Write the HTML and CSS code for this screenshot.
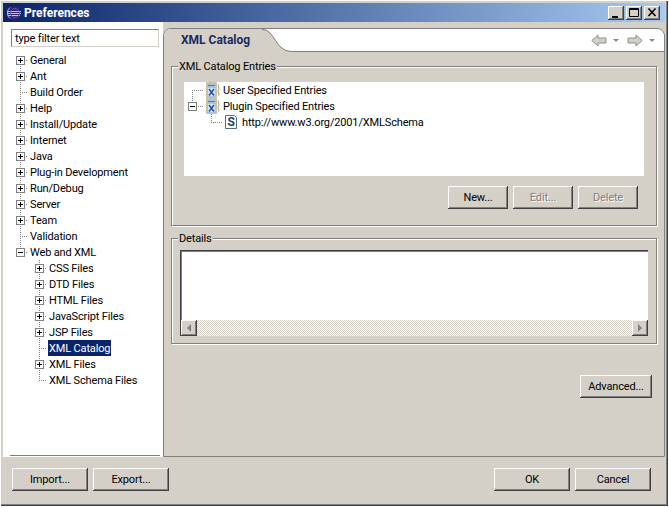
FILE: index.html
```html
<!DOCTYPE html>
<html lang="en">
<head>
    <meta charset="UTF-8">
    <title>Preferences</title>
    <link rel="stylesheet" href="styles.css">
</head>
<body>
    <div class="window">
        <div class="titlebar">
            <svg class="app-icon" width="16" height="16" viewBox="0 0 16 16">
                <circle cx="8" cy="8" r="7" fill="#2c2470"/>
                <path d="M4 2.500a7 7 0 0 0 0 11" fill="none" stroke="#b8a8e0"/>
                <path d="M1 6.500h14M1 8.500h14M2 10.500h12" stroke="#c8c0f0"/>
                <circle cx="9" cy="8" r="4.500" fill="none" stroke="#6858b0"/>
            </svg>
            <span class="title">Preferences</span>
            <div class="win-buttons">
                <span class="win-btn"><svg width="14" height="13" viewBox="0 0 14 13"><path d="M3 10h6v2H3z" fill="#000"/></svg></span>
                <span class="win-btn"><svg width="14" height="13" viewBox="0 0 14 13"><path d="M2.500 2.500h9v8h-9zM2.500 3.500h9" fill="none" stroke="#000"/></svg></span>
                <span class="win-btn close"><svg width="14" height="13" viewBox="0 0 14 13"><path d="M3.500 2.500l7 7.500M10.500 2.500l-7 7.500" fill="none" stroke="#000" stroke-width="1.600"/></svg></span>
            </div>
        </div>

        <div class="main">
            <div class="side">
                <input class="filter" type="text" value="type filter text">
                <div class="tree">
                    <div class="row"><i class="cell tee first"><b class="tog plus"></b></i><span class="label">General</span></div>
                    <div class="row"><i class="cell tee"><b class="tog plus"></b></i><span class="label">Ant</span></div>
                    <div class="row"><i class="cell tee"></i><span class="label">Build Order</span></div>
                    <div class="row"><i class="cell tee"><b class="tog plus"></b></i><span class="label">Help</span></div>
                    <div class="row"><i class="cell tee"><b class="tog plus"></b></i><span class="label">Install/Update</span></div>
                    <div class="row"><i class="cell tee"><b class="tog plus"></b></i><span class="label">Internet</span></div>
                    <div class="row"><i class="cell tee"><b class="tog plus"></b></i><span class="label">Java</span></div>
                    <div class="row"><i class="cell tee"><b class="tog plus"></b></i><span class="label">Plug-in Development</span></div>
                    <div class="row"><i class="cell tee"><b class="tog plus"></b></i><span class="label">Run/Debug</span></div>
                    <div class="row"><i class="cell tee"><b class="tog plus"></b></i><span class="label">Server</span></div>
                    <div class="row"><i class="cell tee"><b class="tog plus"></b></i><span class="label">Team</span></div>
                    <div class="row"><i class="cell tee"></i><span class="label">Validation</span></div>
                    <div class="row"><i class="cell ell"><b class="tog"></b></i><span class="label">Web and XML</span></div>
                    <div class="row"><i class="cell"></i><i class="cell tee"><b class="tog plus"></b></i><span class="label">CSS Files</span></div>
                    <div class="row"><i class="cell"></i><i class="cell tee"><b class="tog plus"></b></i><span class="label">DTD Files</span></div>
                    <div class="row"><i class="cell"></i><i class="cell tee"><b class="tog plus"></b></i><span class="label">HTML Files</span></div>
                    <div class="row"><i class="cell"></i><i class="cell tee"><b class="tog plus"></b></i><span class="label">JavaScript Files</span></div>
                    <div class="row"><i class="cell"></i><i class="cell tee"><b class="tog plus"></b></i><span class="label">JSP Files</span></div>
                    <div class="row"><i class="cell"></i><i class="cell tee"></i><span class="label selected">XML Catalog</span></div>
                    <div class="row"><i class="cell"></i><i class="cell tee"><b class="tog plus"></b></i><span class="label">XML Files</span></div>
                    <div class="row"><i class="cell"></i><i class="cell ell"></i><span class="label">XML Schema Files</span></div>
                </div>
            </div>

            <div class="page">
                <div class="page-head">
                    <div class="tab">XML Catalog</div>
                    <svg class="tab-curve" width="30" height="23" viewBox="0 0 30 23">
                        <path d="M0 0H1C12 0 14 22 29 22H30V23H0Z" fill="#d4d0c8"/>
                        <path d="M0 .5H1C12 .5 14 22.500 29 22.500H30" fill="none" stroke="#808080"/>
                    </svg>
                    <div class="nav">
                        <svg width="16" height="13" viewBox="0 0 16 13"><path d="M.8 6.500L7 1v3h8v5H7v3z" fill="#d0d0c8" stroke="#909088"/></svg>
                        <span class="drop"></span>
                        <svg width="16" height="13" viewBox="0 0 16 13"><path d="M15.200 6.500L9 1v3H1v5h8v3z" fill="#d0d0c8" stroke="#909088"/></svg>
                        <span class="drop"></span>
                    </div>
                </div>

                <div class="page-body">
                    <fieldset class="group entries">
                        <legend>XML Catalog Entries</legend>
                        <div class="catalog">
                            <div class="row"><i class="cell ell first wide"></i>
                                <svg class="cat-icon" width="16" height="16" viewBox="0 0 16 16"><use href="#catalog"/></svg>
                                <span class="cat-label">User Specified Entries</span></div>
                            <div class="row"><i class="cell ell wide"><b class="tog"></b></i>
                                <svg class="cat-icon" width="16" height="16" viewBox="0 0 16 16"><use href="#catalog"/></svg>
                                <span class="cat-label">Plugin Specified Entries</span></div>
                            <div class="row"><i class="cell wide"></i><i class="cell ell wide child"></i>
                                <svg class="cat-icon" width="16" height="16" viewBox="0 0 16 16">
                                    <path d="M1.500 1.500h9l2 2v11h-11z" fill="#fff" stroke="#5a6a70"/>
                                    <text x="7" y="12" class="s-mark">S</text>
                                </svg>
                                <span class="url-label">http://www.w3.org/2001/XMLSchema</span></div>
                        </div>
                        <div class="actions">
                            <button class="btn" type="button">New...</button>
                            <button class="btn" type="button" disabled>Edit...</button>
                            <button class="btn" type="button" disabled>Delete</button>
                        </div>
                    </fieldset>

                    <fieldset class="group details">
                        <legend>Details</legend>
                        <div class="details-box">
                            <div class="scrollbar">
                                <span class="sb-btn"><svg width="6" height="8" viewBox="0 0 6 8"><path d="M5 0v8L1 4z" fill="#808080"/></svg></span>
                                <span class="sb-track"></span>
                                <span class="sb-btn"><svg width="6" height="8" viewBox="0 0 6 8"><path d="M1 0v8l4-4z" fill="#808080"/></svg></span>
                            </div>
                        </div>
                    </fieldset>

                    <div class="advanced-row">
                        <button class="btn advanced" type="button">Advanced...</button>
                    </div>
                </div>
            </div>
        </div>

        <div class="footer">
            <button class="btn big" type="button">Import...</button>
            <button class="btn big" type="button">Export...</button>
            <span class="spacer"></span>
            <button class="btn big" type="button">OK</button>
            <button class="btn big" type="button">Cancel</button>
        </div>
    </div>

    <svg class="defs" width="0" height="0">
        <symbol id="catalog" viewBox="0 0 16 16">
            <path d="M2.500 .5h10v15h-10z" fill="#a8c4e4" stroke="#c8c4a0"/>
            <path d="M4 3.500h7" stroke="#5878a8"/>
            <path d="M4 6h7v8H4z" fill="#d8e4f0"/>
            <path d="M5 7l5 6.500M10 7l-5 6.500" stroke="#1c50b0" stroke-width="1.500"/>
            <path d="M14.500 2.500q-1 1 0 2.500t0 3 0 3 0 2.500" fill="none" stroke="#a89868"/>
        </symbol>
    </svg>
</body>
</html>
```

FILE: styles.css
```css
* {
    box-sizing: border-box;
}

body {
    margin: 0;
    background: white;
    font-family: Roboto, "Liberation Sans", Arial, sans-serif;
    font-size: 11px;
    letter-spacing: -0.15px;
    color: black;
}

.defs {
    display: block;
}

.window {
    width: 668px;
    height: 506px;
    padding: 3px 3px 2px 3px;
    background: #d4d0c8;
    box-shadow: inset 1px 1px 0 #fff, inset -1px -1px 0 #404040, inset -2px -2px 0 #808080;
    display: flex;
    flex-direction: column;
}

/* title bar */
.titlebar {
    height: 19px;
    flex: none;
    display: flex;
    align-items: center;
    padding: 0 5px 0 3px;
    background: linear-gradient(to right, #0a246a, #a6caf0);
}

.app-icon {
    flex: none;
}

.title {
    margin-left: 2px;
    color: white;
    font-weight: bold;
    font-size: 12px;
    letter-spacing: 0;
}

.win-buttons {
    margin-left: auto;
    display: flex;
    gap: 2px;
}

.win-btn {
    width: 16px;
    height: 14px;
    display: flex;
    align-items: center;
    justify-content: center;
    background: #d4d0c8;
    box-shadow: inset -1px -1px 0 #404040, inset 1px 1px 0 #fff, inset -2px -2px 0 #808080;
}

/* layout */
.main {
    flex: 1;
    display: flex;
    min-height: 0;
}

.side {
    width: 160px;
    flex: none;
    padding: 7px 3px 1px 8px;
    background: white;
    display: flex;
    flex-direction: column;
}

.filter {
    width: 148px;
    height: 18px;
    padding: 0 3px;
    border: 1px solid #d4d0c8;
    border-top-color: #808080;
    border-left-color: #808080;
    font: inherit;
    letter-spacing: inherit;
    color: black;
    outline: none;
}

.tree {
    flex: 1;
    margin-top: 5px;
    margin-left: -1px;
    border-bottom: 1px solid #808080;
}

.row {
    height: 16px;
    display: flex;
    align-items: center;
}

/* tree connectors */
.cell {
    --x: 10px;
    --w: 19px;
    width: var(--w);
    height: 16px;
    flex: none;
    display: flex;
    align-items: center;
    background-repeat: no-repeat;
}

.tee, .ell {
    background-image:
        repeating-linear-gradient(to bottom, #808080 0 1px, transparent 1px 2px),
        repeating-linear-gradient(to right, #808080 0 1px, transparent 1px 2px);
    background-size: 1px 16px, calc(var(--w) - var(--x) - 1px) 1px;
    background-position: var(--x) 0, var(--x) 8px;
}

.ell {
    background-size: 1px 8px, calc(var(--w) - var(--x) - 1px) 1px;
}

.first {
    background-size: 1px 8px, calc(var(--w) - var(--x) - 1px) 1px;
    background-position: var(--x) 8px, var(--x) 8px;
}

.wide {
    --x: 8px;
    --w: 20px;
}

.child {
    --x: 7px;
}

.tog {
    width: 9px;
    height: 9px;
    margin-left: calc(var(--x) - 4px);
    border: 1px solid #808080;
    background:
        linear-gradient(#000, #000) center / 5px 1px no-repeat,
        white;
}

.plus {
    background:
        linear-gradient(#000, #000) center / 5px 1px no-repeat,
        linear-gradient(#000, #000) center / 1px 5px no-repeat,
        white;
}

.label {
    height: 16px;
    padding: 0 1px;
    line-height: 18px;
    white-space: nowrap;
}

.selected {
    background: #0a246a;
    color: white;
}

/* right page */
.page {
    flex: 1;
    margin-top: 6px;
    display: flex;
    flex-direction: column;
    border: 1px solid #808080;
    border-radius: 8px 8px 0 0;
    background: #d4d0c8;
    overflow: hidden;
}

.page-head {
    height: 23px;
    flex: none;
    display: flex;
    background: white;
}

.tab {
    width: 98px;
    padding-left: 17px;
    background: #d4d0c8;
    color: #1c2a60;
    font-weight: bold;
    font-size: 12px;
    letter-spacing: 0;
    line-height: 23px;
}

.tab-curve {
    flex: none;
}

.nav {
    flex: 1;
    display: flex;
    align-items: center;
    justify-content: flex-end;
    padding-right: 9px;
    border-bottom: 1px solid #808080;
}

.drop {
    width: 0;
    height: 0;
    margin: 0 8px 0 6px;
    border-left: 3px solid transparent;
    border-right: 3px solid transparent;
    border-top: 3px solid #8c8c84;
}

.drop:last-child {
    margin-right: 0;
}

.page-body {
    flex: 1;
    padding: 8px 7px 0 7px;
}

.group {
    margin: 0;
    min-width: 0;
    border: 1px solid #808080;
    box-shadow: inset 1px 1px 0 #fff, 1px 1px 0 #fff;
}

.group legend {
    padding: 0 1px;
    background: #d4d0c8;
    line-height: 13px;
}

.entries {
    padding: 9px 12px 16px 12px;
}

.entries legend {
    margin-left: -6px;
}

.catalog {
    height: 94px;
    background: white;
}

.cat-icon {
    flex: none;
}

.cat-label {
    margin-left: 3px;
    white-space: nowrap;
}

.url-label {
    margin-left: 2px;
    white-space: nowrap;
}

.s-mark {
    font-family: Roboto, Arial, sans-serif;
    font-size: 12px;
    font-weight: bold;
    text-anchor: middle;
    fill: #104868;
}

.actions {
    margin-top: 10px;
    padding-right: 6px;
    display: flex;
    justify-content: flex-end;
    gap: 5px;
}

.btn {
    width: 60px;
    height: 23px;
    padding: 0;
    border: 0;
    background: #d4d0c8;
    box-shadow: inset -1px -1px 0 #404040, inset 1px 1px 0 #fff, inset -2px -2px 0 #808080;
    font: inherit;
    letter-spacing: inherit;
    color: black;
}

.btn:disabled {
    color: #808080;
    text-shadow: 1px 1px 0 #fff;
}

.details {
    margin-top: 6px;
    padding: 5px 8px 7px 8px;
}

.details legend {
    margin-left: -2px;
}

.details-box {
    height: 86px;
    display: flex;
    flex-direction: column;
    justify-content: flex-end;
    background: white;
    border-top: 1px solid #404040;
    border-left: 1px solid #404040;
    box-shadow: inset 1px 1px 0 #808080;
}

.scrollbar {
    height: 16px;
    display: flex;
}

.sb-btn {
    width: 16px;
    height: 16px;
    flex: none;
    display: flex;
    align-items: center;
    justify-content: center;
    background: #d4d0c8;
    box-shadow: inset -1px -1px 0 #404040, inset 1px 1px 0 #fff, inset -2px -2px 0 #808080;
}

.sb-track {
    flex: 1;
    background: conic-gradient(#d4d0c8 25%, #fff 0 50%, #d4d0c8 0 75%, #fff 0) 0 0 / 2px 2px;
}

.advanced-row {
    margin-top: 31px;
    padding-right: 5px;
    display: flex;
    justify-content: flex-end;
}

.advanced {
    width: 72px;
}

/* bottom buttons */
.footer {
    height: 47px;
    flex: none;
    padding: 11px 14px 0 9px;
    display: flex;
    align-items: flex-start;
    gap: 5px;
}

.big {
    width: 76px;
}

.spacer {
    flex: 1;
}
```
